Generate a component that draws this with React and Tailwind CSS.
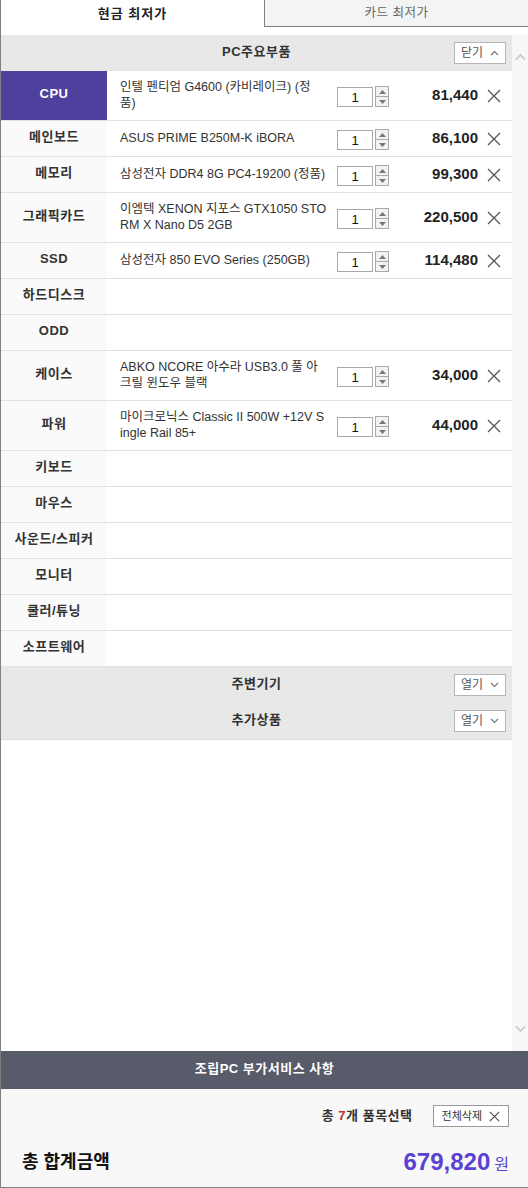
import React from "react";

const FONT = { fontFamily: '"Liberation Sans", "Noto Sans CJK KR", sans-serif' };

const rows = [
  { label: "CPU", name: ["인텔 펜티엄 G4600 (카비레이크) (정", "품)"], price: "81,440", active: true },
  { label: "메인보드", name: ["ASUS PRIME B250M-K iBORA"], price: "86,100" },
  { label: "메모리", name: ["삼성전자 DDR4 8G PC4-19200 (정품)"], price: "99,300" },
  { label: "그래픽카드", name: ["이엠텍 XENON 지포스 GTX1050 STO", "RM X Nano D5 2GB"], price: "220,500" },
  { label: "SSD", name: ["삼성전자 850 EVO Series (250GB)"], price: "114,480" },
  { label: "하드디스크" },
  { label: "ODD" },
  { label: "케이스", name: ["ABKO NCORE 아수라 USB3.0 풀 아", "크릴 윈도우 블랙"], price: "34,000" },
  { label: "파워", name: ["마이크로닉스 Classic II 500W +12V S", "ingle Rail 85+"], price: "44,000" },
  { label: "키보드" },
  { label: "마우스" },
  { label: "사운드/스피커" },
  { label: "모니터" },
  { label: "쿨러/튜닝" },
  { label: "소프트웨어" },
];

function XIcon({ size = 14, color = "#555" }) {
  return (
    <svg width={size} height={size} viewBox="0 0 14 14">
      <path d="M1 1 L13 13 M13 1 L1 13" stroke={color} strokeWidth="1.3" fill="none" />
    </svg>
  );
}

function Chevron({ up, color = "#666", w = 9, h = 6 }) {
  return (
    <svg width={w} height={h} viewBox="0 0 9 6">
      <path d={up ? "M1 5 L4.5 1.5 L8 5" : "M1 1 L4.5 4.5 L8 1"} stroke={color} strokeWidth="1.2" fill="none" />
    </svg>
  );
}

function Spinner() {
  return (
    <div className="flex flex-col w-[14px] h-[21px] border border-[#a9a9a9] bg-[#f2f2f2]">
      <div className="flex-1 flex items-center justify-center border-b border-[#a9a9a9]">
        <svg width="7" height="4" viewBox="0 0 7 4"><path d="M0 4 L3.5 0 L7 4 Z" fill="#777" /></svg>
      </div>
      <div className="flex-1 flex items-center justify-center">
        <svg width="7" height="4" viewBox="0 0 7 4"><path d="M0 0 L3.5 4 L7 0 Z" fill="#777" /></svg>
      </div>
    </div>
  );
}

function ToggleBtn({ text, up }) {
  return (
    <div className="flex items-center gap-[7px] h-[22px] px-[6px] bg-white border border-[#b5b5b5] text-[12px] text-[#555]">
      <span>{text}</span>
      <Chevron up={up} color="#777" />
    </div>
  );
}

function SectionHeader({ title, btn, up }) {
  return (
    <div className="relative flex items-center justify-center h-[36px] bg-[#e8e8e8]">
      <span className="text-[13px] font-bold text-[#333] tracking-[0.5px] pb-[3px]">{title}</span>
      <div className="absolute right-[6px] top-[7px]">
        <ToggleBtn text={btn} up={up} />
      </div>
    </div>
  );
}

function Row({ r }) {
  const tall = r.name && r.name.length > 1;
  return (
    <div className={`flex border-b border-[#e2e2e2] ${tall ? "h-[50px]" : "h-[36px]"}`}>
      <div
        className={`w-[106px] shrink-0 flex items-center justify-center pb-[3px] text-[13px] font-bold tracking-[0.5px] ${
          r.active ? "bg-[#4f409d] text-white" : "bg-[#fafafa] text-[#333]"
        }`}
      >
        {r.label}
      </div>
      {r.name ? (
        <div className="flex flex-1 items-center bg-white">
          <div className="w-[230px] pl-[13px] pr-[8px] text-[12.5px] leading-[16px] text-[#333] pb-[2px]">
            {r.name.map((l, i) => (
              <div key={i} className="whitespace-nowrap">{l}</div>
            ))}
          </div>
          <div className="flex items-center gap-[2px] mt-[2px]">
            <div className="w-[36px] h-[20px] border border-[#a9a9a9] bg-white flex items-center justify-center text-[13px] text-[#111] pt-[2px]">
              1
            </div>
            <Spinner />
          </div>
          <div className="flex-1 text-right text-[15px] font-bold text-[#222]">{r.price}</div>
          <div className="ml-[9px] mr-[11px] flex items-center">
            <XIcon size={14} color="#555" />
          </div>
        </div>
      ) : (
        <div className="flex-1 bg-white" />
      )}
    </div>
  );
}

export default function App() {
  return (
    <div style={FONT} className="w-[528px] h-[1188px] flex flex-col bg-white border-l border-b border-[#808080] overflow-hidden">
      {/* tabs */}
      <div className="flex h-[27px] shrink-0">
        <div className="w-[263px] flex items-center justify-center text-[13px] font-bold text-[#222] tracking-[1px]">
          현금 최저가
        </div>
        <div className="flex-1 flex items-center justify-center bg-[#f4f4f4] border-l border-b border-[#808080] text-[12.5px] text-[#666] tracking-[0.5px]">
          카드 최저가
        </div>
      </div>
      <div className="h-[8px] shrink-0" />
      {/* scroll area */}
      <div className="flex h-[1016px] shrink-0">
        <div className="flex-1 flex flex-col">
          <SectionHeader title="PC주요부품" btn="닫기" up />
          {rows.map((r) => (
            <Row key={r.label} r={r} />
          ))}
          <SectionHeader title="주변기기" btn="열기" />
          <div className="border-b border-[#dcdcdc]">
            <SectionHeader title="추가상품" btn="열기" />
          </div>
          <div className="flex-1 bg-white" />
        </div>
        <div className="w-[16px] shrink-0 bg-[#f7f7f7] flex flex-col items-center justify-between pt-[18px] pb-[18px]">
          <Chevron up color="#c8c8c8" w={13} h={8} />
          <Chevron color="#c8c8c8" w={13} h={8} />
        </div>
      </div>
      {/* bottom bar */}
      <div className="h-[38px] shrink-0 bg-[#585b6a] flex items-center justify-center pb-[3px] text-[13px] font-bold text-white tracking-[0.5px]">
        조립PC 부가서비스 사항
      </div>
      <div className="flex-1 bg-[#f8f8f8] flex flex-col px-[21px] pr-[19px]">
        <div className="flex items-center justify-end mt-[16px] gap-[20px]">
          <span className="text-[13px] font-bold text-[#333] tracking-[0.5px]">
            총 <span className="text-[#c0302c]">7</span>개 품목선택
          </span>
          <div className="flex items-center gap-[7px] h-[22px] px-[8px] bg-white border border-[#999] text-[11px] text-[#333]">
            <span>전체삭제</span>
            <XIcon size={11} color="#444" />
          </div>
        </div>
        <div className="flex items-center justify-between mt-[17px]">
          <span className="text-[18px] font-bold text-[#111]">총 합계금액</span>
          <span className="flex items-baseline gap-[4px] text-[#5a42d3]">
            <span className="text-[24px] font-bold">679,820</span>
            <span className="text-[16px]">원</span>
          </span>
        </div>
      </div>
    </div>
  );
}
